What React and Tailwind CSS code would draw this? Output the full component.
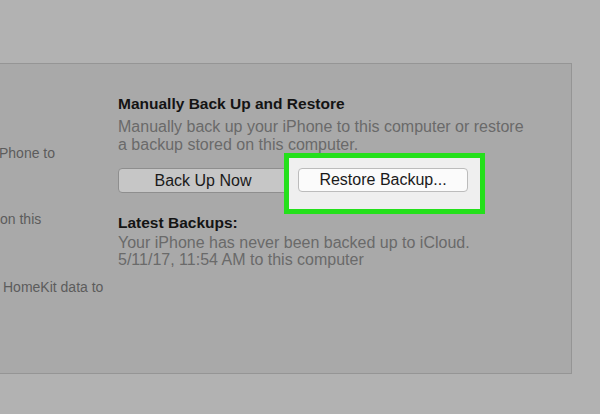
import React from "react";

function App() {
  return (
    <div
      className="w-[600px] h-[414px] overflow-hidden bg-[#b2b2b2] pt-[63px]"
      style={{ fontFamily: '"Liberation Sans", Arial, sans-serif' }}
    >
      <div className="w-[572px] h-[311px] bg-[#a9a9a9] border-t border-r border-b border-[#959595] flex">
        {/* left column, cut off */}
        <div className="w-[118px] shrink-0 flex flex-col pt-[80px] text-[14px] leading-[18px] text-[#5c5c5c] whitespace-nowrap">
          <div className="-ml-[1px]">Phone to</div>
          <div className="mt-[48px]">on this</div>
          <div className="mt-[50px] ml-[3px]">HomeKit data to</div>
        </div>

        {/* main section */}
        <div className="flex flex-col pt-[31px] whitespace-nowrap">
          <h3 className="text-[15.5px] leading-[18px] font-bold text-[#141414]">
            Manually Back Up and Restore
          </h3>
          <p className="mt-[5px] text-[16px] leading-[18px] text-[#6a6a6a]">
            Manually back up your iPhone to this computer or restore
            <br />a backup stored on this computer.
          </p>

          <div className="mt-[14px] flex items-start">
            <button className="w-[170px] h-[25px] rounded-[4px] border border-[#8e8e8e] bg-[#c6c6c6] text-[16px] leading-none text-[#1a1a1a]">
              Back Up Now
            </button>
            <div className="relative -ml-[4px] -mt-[15px] -mb-[22px] border-[5px] border-[#24e01b] bg-[#efefef] pl-[9px] pr-[12px] pt-[10px] pb-[17px]">
              <button className="w-[170px] h-[24px] rounded-[4px] border border-[#bcbcbc] bg-[#fbfbfb] text-[16px] leading-none text-[#1a1a1a]">
                Restore Backup...
              </button>
            </div>
          </div>

          <h4 className="mt-[21px] text-[15.5px] leading-[18px] font-bold text-[#141414]">
            Latest Backups:
          </h4>
          <p className="mt-[2px] text-[16px] leading-[17px] text-[#6a6a6a]">
            Your iPhone has never been backed up to iCloud.
            <br />
            5/11/17, 11:54 AM to this computer
          </p>
        </div>
      </div>
    </div>
  );
}

export default App;
